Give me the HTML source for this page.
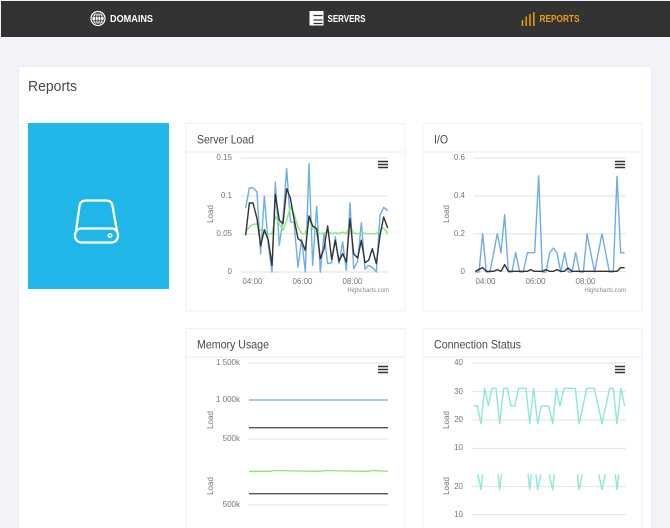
<!DOCTYPE html>
<html><head><meta charset="utf-8"><title>Reports</title>
<style>
html,body{margin:0;padding:0;background:#f1f3f8;width:670px;height:528px;overflow:hidden}
svg{display:block;filter:blur(.35px)}
text{font-family:"Liberation Sans",sans-serif}
.t{font-size:12px;fill:#4a4a4a}
.a{font-size:8px;fill:#777;text-anchor:end}
.x{font-size:8px;fill:#777;text-anchor:middle}
.h{font-size:6px;fill:#888;text-anchor:end}
.n{font-size:10.5px;font-weight:bold;fill:#fff}
.g{stroke:#e8e8e8;stroke-width:1.2}
.l{fill:none;stroke-width:1.4;stroke-linejoin:round;vector-effect:non-scaling-stroke}
.card{fill:#fff;stroke:#eef0f6;stroke-width:1}
.div{stroke:#eef0f6;stroke-width:1.2}
.m{stroke:#333;stroke-width:1.6}
</style></head><body>
<svg width="670" height="528" viewBox="0 0 670 528" xmlns="http://www.w3.org/2000/svg">
<defs>
<clipPath id="cs"><rect x="472" y="380" width="155" height="90"/></clipPath>
<clipPath id="cs2"><rect x="472" y="474.3" width="155" height="60"/></clipPath>
</defs>
<rect width="670" height="528" fill="#f1f3f8"/>
<rect x="1" y="1" width="669" height="36" fill="#333"/>
<rect x="18.5" y="66.5" width="633" height="470" fill="#fff" stroke="#eceef5"/>

<!-- nav: domains -->
<circle cx="98" cy="18.5" r="7.6" fill="#fff"/>
<g fill="none" stroke="#333" stroke-width=".8">
<circle cx="98" cy="18.5" r="6"/><ellipse cx="98" cy="18.5" rx="2.8" ry="6"/>
<path d="M98 12.500v12M92.200 16.200h11.600M92.200 20.800h11.600"/>
</g>
<text class="n" x="110" y="22" textLength="43" lengthAdjust="spacingAndGlyphs">DOMAINS</text>
<!-- nav: servers -->
<rect x="309.500" y="11" width="14" height="14.500" fill="#fff"/>
<path d="M313.500 15.500h9M313.500 20h9M313.500 23.500h9" stroke="#333" stroke-width="1.200" fill="none"/>
<text class="n" x="327.500" y="22" textLength="38" lengthAdjust="spacingAndGlyphs">SERVERS</text>
<!-- nav: reports -->
<path d="M522.500 26v-6M526.200 26v-9.500M530 26v-12M533.800 26v-14" stroke="#f09a10" stroke-width="1.500" fill="none"/>
<text class="n" x="539.500" y="22" textLength="40" lengthAdjust="spacingAndGlyphs" style="fill:#f09a10">REPORTS</text>

<text x="28" y="91" font-size="15" fill="#4a4a4a" textLength="49" lengthAdjust="spacingAndGlyphs">Reports</text>

<!-- blue tile -->
<rect x="28" y="123" width="141" height="166" fill="#21b6e8"/>
<g fill="none" stroke="#fff" stroke-width="2.300">
<path d="M76 231 L79.500 206 Q80.300 200.500 86 200.500 H106 Q111.700 200.500 112.500 206 L117 231"/>
<rect x="75" y="228.500" width="43" height="14" rx="6.500"/>
<circle cx="110" cy="235.500" r="1.700" stroke-width="1.500"/>
</g>

<!-- cards -->
<rect class="card" x="186" y="123.500" width="219" height="187.500"/>
<rect class="card" x="423" y="123.500" width="219" height="187.500"/>
<rect class="card" x="186" y="328.500" width="219" height="210"/>
<rect class="card" x="423" y="328.500" width="219" height="210"/>
<path class="div" d="M186 152h219M423 152h219M186 357h219M423 357h219"/>
<text class="t" x="197" y="143.500" textLength="57" lengthAdjust="spacingAndGlyphs">Server Load</text>
<text class="t" x="434" y="143.500" textLength="14" lengthAdjust="spacingAndGlyphs">I/O</text>
<text class="t" x="197" y="348.500" textLength="72" lengthAdjust="spacingAndGlyphs">Memory Usage</text>
<text class="t" x="434" y="348.500" textLength="87" lengthAdjust="spacingAndGlyphs">Connection Status</text>

<!-- Server Load -->
<path class="g" d="M241 158H388M241 196H388M241 234H388M241 272H388"/>
<text class="a" x="232" y="160">0.15</text><text class="a" x="232" y="198">0.1</text><text class="a" x="232" y="236">0.05</text><text class="a" x="232" y="274">0</text>
<text class="x" transform="translate(213,214) rotate(-90)">Load</text>
<text class="x" x="252.500" y="284">04:00</text><text class="x" x="302.500" y="284">06:00</text><text class="x" x="352.500" y="284">08:00</text>
<text class="h" x="389" y="292">Highcharts.com</text>
<g transform="translate(185,122) scale(.33333)">
<polyline class="l" stroke="#6dade9" points="182,258 193,198 204,197 216,210 227,395 238,222 250,370 261,450 271,180 283,370 294,290 305,140 316,298 327,302 339,435 350,352 361,450 372,125 383,430 395,253 406,450 417,335 428,425 440,422 451,345 462,425 473,360 484,445 495,243 506,440 518,418 529,302 540,442 551,430 562,436 574,450 585,280 596,256 608,266"/>
<polyline class="l" stroke="#88ea75" points="182,330 193,315 204,307 216,306 227,325 238,335 250,335 261,335 271,283 283,305 294,325 305,295 316,255 327,275 339,315 350,335 361,335 372,293 383,320 395,328 406,335 417,333 428,328 440,335 451,332 462,335 473,330 484,335 495,310 506,333 518,335 529,331 540,334 551,335 562,335 574,335 585,325 596,318 608,335"/>
<polyline class="l" stroke="#333" points="182,340 193,243 204,243 216,290 227,372 238,323 250,355 261,430 271,217 283,295 294,305 305,200 316,228 327,290 339,350 350,358 361,385 372,282 383,312 395,320 406,410 417,380 428,312 440,412 451,355 462,418 473,395 484,420 495,290 506,395 518,408 529,355 540,422 551,415 562,380 574,425 585,340 596,285 608,318"/>
</g>
<path class="m" d="M378 161.500h10M378 164.500h10M378 167.500h10"/>

<!-- I/O -->
<path class="g" d="M474 158H626M474 196H626M474 234H626M474 271.500H626"/>
<text class="a" x="465" y="160">0.6</text><text class="a" x="465" y="198">0.4</text><text class="a" x="465" y="236">0.2</text><text class="a" x="465" y="274">0</text>
<text class="x" transform="translate(449,214) rotate(-90)">Load</text>
<text class="x" x="485.500" y="284">04:00</text><text class="x" x="535.500" y="284">06:00</text><text class="x" x="585.500" y="284">08:00</text>
<text class="h" x="626" y="292">Highcharts.com</text>
<g transform="translate(422,122) scale(.33333)">
<polyline class="l" stroke="#6dade9" points="160,450 171,450 182,335 193,450 204,450 215,392 226,335 237,392 248,278 259,450 270,450 281,392 293,450 304,450 316,392 327,392 338,392 350,162 361,450 372,450 383,392 394,378 405,392 416,450 428,392 439,450 450,450 461,392 473,450 484,450 495,335 506,392 518,450 529,392 540,335 551,392 562,450 574,450 585,163 596,392 608,392"/>
<polyline class="l" stroke="#333" points="160,448 171,442 182,437 193,448 215,448 226,443 237,448 248,428 259,448 315,448 326,443 337,448 361,448 372,443 383,448 394,448 405,443 416,448 427,448 438,438 450,448 585,448 596,437 608,437"/>
</g>
<path class="m" d="M615 161.500h10M615 164.500h10M615 167.500h10"/>

<!-- Memory -->
<path class="g" d="M248 363H388M248 439H388M248 505H388"/>
<text class="a" x="240" y="365">1 500k</text><text class="a" x="240" y="402">1 000k</text><text class="a" x="240" y="441">500k</text><text class="a" x="240" y="507">500k</text>
<text class="x" transform="translate(213,420) rotate(-90)">Load</text>
<text class="x" transform="translate(213,486) rotate(-90)">Load</text>
<path d="M249 400H388" stroke="#85baee" stroke-width="1.400"/>
<path d="M249 427.700H388M249 493.700H388" stroke="#555" stroke-width="1.400"/>
<polyline fill="none" stroke="#88ea75" stroke-width="1.300" points="249,471.300 270,471.300 274,470.500 300,471 320,471.300 326,470.500 345,471 368,471.300 372,470.500 388,471.300"/>
<path class="m" d="M378 366.500h10M378 369.500h10M378 372.500h10"/>

<!-- Connection -->
<path class="g" d="M472 363H626M472 391.500H626M472 420H626M472 448.500H626M472 486.500H626M472 514.500H626"/>
<text class="a" x="463" y="365">40</text><text class="a" x="463" y="394">30</text><text class="a" x="463" y="422">20</text><text class="a" x="463" y="450">10</text><text class="a" x="463" y="489">20</text><text class="a" x="463" y="517">10</text>
<text class="x" transform="translate(449,420) rotate(-90)">Load</text>
<text class="x" transform="translate(449,486) rotate(-90)">Load</text>
<g clip-path="url(#cs)">
<g transform="translate(422,325) scale(.33333)">
<polyline class="l" stroke="#8ce8dc" points="155,243 166,243 177,296 188,190 199,243 210,190 222,190 233,296 245,190 256,190 267,243 278,243 290,190 312,190 323,296 335,190 347,296 358,243 380,243 392,296 403,190 414,243 426,190 460,190 471,296 483,243 494,190 517,190 540,296 563,190 574,190 585,296 597,190 608,243"/>
</g></g>
<g clip-path="url(#cs2)">
<g transform="translate(422,391) scale(.33333)">
<polyline class="l" stroke="#8ce8dc" points="155,243 166,243 177,296 188,190 199,243 210,190 222,190 233,296 245,190 256,190 267,243 278,243 290,190 312,190 323,296 335,190 347,296 358,243 380,243 392,296 403,190 414,243 426,190 460,190 471,296 483,243 494,190 517,190 540,296 563,190 574,190 585,296 597,190 608,243"/>
</g></g>
<path class="m" d="M615 366.500h10M615 369.500h10M615 372.500h10"/>
</svg>
</body></html>
